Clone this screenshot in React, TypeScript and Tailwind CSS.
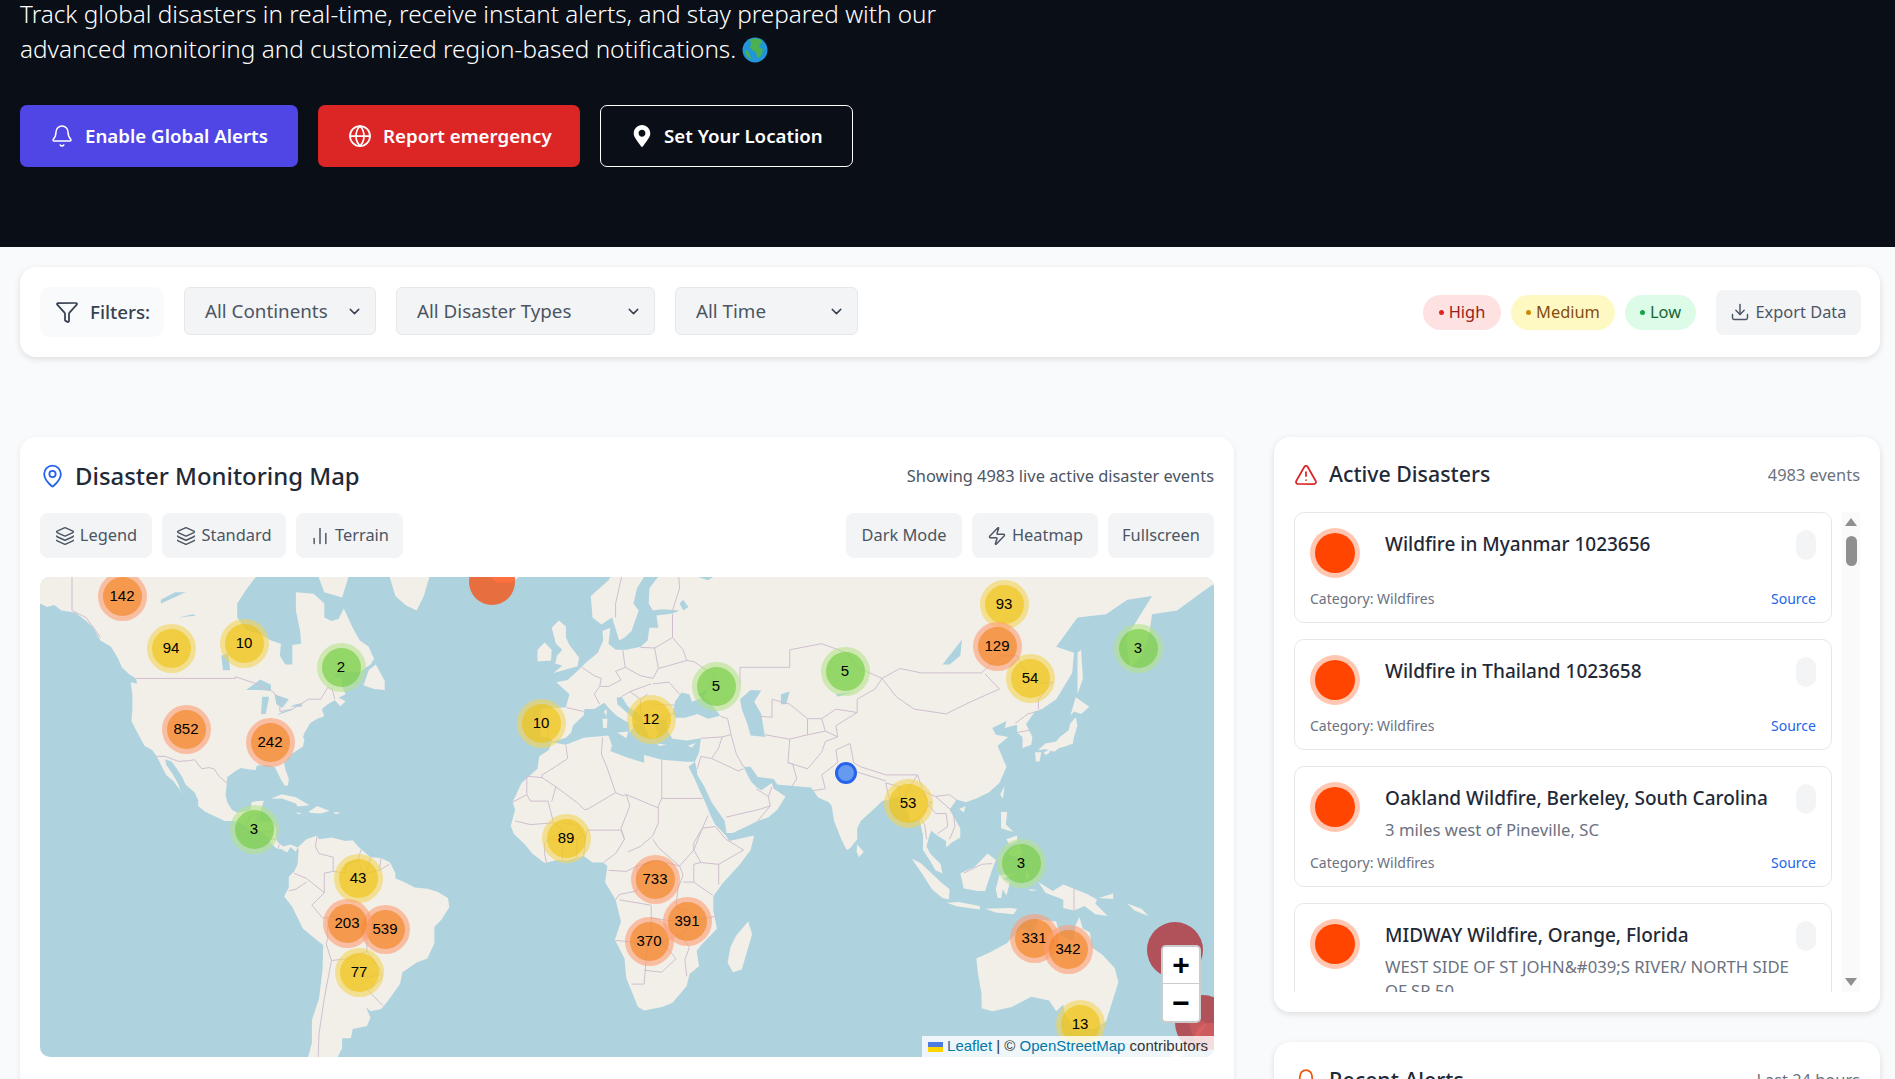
import React from 'react';
import { Bell, ChartNoAxesColumn, ChevronDown, Download, Filter, Globe, Layers, MapPin, TriangleAlert, Zap } from 'lucide-react';
import { FaMapMarkerAlt } from 'react-icons/fa';

// map projection: web mercator fitted to the visible part of the world
const px = (lon: number) => 533 + 3.553 * lon;
const py = (lat: number) => 301.5 - 203.4 * Math.log(Math.tan(Math.PI / 4 + (lat * Math.PI) / 360));
const toPath = (c: number[], close = true) => {
  let d = '';
  for (let i = 0; i < c.length; i += 2) {
    d += `${i === 0 ? 'M' : 'L'}${px(c[i]).toFixed(1)} ${py(c[i + 1]).toFixed(1)}`;
  }
  return close ? d + 'Z' : d;
};

const land: number[][] = [
  // north america
  [-155,72,-155,60,-150,61,-148,60.5,-146,60.8,-144,60,-140,59.7,-137,58.5,-135,57.5,-133,55.5,-130,54.5,-128,52.5,-127,51,-125,49.8,-123,49,-122.7,48,-124.5,48.3,-124,46,-124,43,-124.3,40.5,-122.5,37.8,-120.6,35,-118.5,34,-117.2,32.6,-116,30.5,-114.5,28,-112.5,26.5,-110.5,24,-109.7,23,-110.5,23.8,-111,25.5,-112.5,28,-114.5,30.5,-114.8,31.8,-113,31.3,-111.5,29.5,-110,27.5,-109,25.5,-106.5,23.5,-105.5,21.5,-105.5,20,-103.5,18.5,-101,17.3,-98,16,-95,16,-93,15,-91,13.8,-88,13.2,-87,12.5,-85.5,11,-85,9.8,-83.5,8.5,-82,8.2,-80.5,7.3,-79.5,8.8,-78,7.5,-77.5,8.7,-79.5,9.5,-81.5,9,-83,10,-83.7,11.5,-83.5,14,-85,15.9,-87.5,15.8,-88.8,15.9,-88.2,17.5,-87.7,19.5,-87,21.4,-89,21.3,-90.5,21,-90.7,19,-92,18.6,-94.5,18.2,-96,19,-97.3,21,-97.8,23,-97.4,25.8,-97.3,27.5,-95,29,-93.5,29.7,-91,29.3,-89.3,29.2,-89,30.3,-86,30.4,-84,30,-82.8,28,-82,26.5,-81,25.2,-80.2,25.4,-80,27,-81,29.5,-81.3,31,-79,33.2,-76,34.8,-75.6,36.5,-76,37,-75.5,38,-74,40,-72,41,-70,41.5,-70.7,43,-69,44,-67,44.8,-65.5,43.6,-64,44.6,-66,45.3,-64,46,-65,47.5,-65,49,-67,49.3,-69.5,47.8,-66,50.2,-60,50.2,-57,51.5,-56,52.5,-57.5,54.5,-60,55.5,-62,57.5,-64.5,60.3,-66,58.8,-68,58.5,-70,59,-70,61,-73,62.3,-78,62.5,-78,60,-76.8,57,-76.5,55,-79,54.8,-79,51.5,-81,51.5,-82.5,53,-82.2,55,-85,55.5,-88,56.5,-92,57.2,-94.5,59,-94.5,61,-92,62.8,-90,64,-87,65.5,-85,66.5,-82,67,-82,72],
  [-70,62.5,-65,61.8,-62,66,-68,70,-75,68],
  [-44,60,-42,62,-40,65,-30,68,-20,72,-60,78,-55,70,-52,65,-50,62,-47,60.7],
  [-59,47.7,-56,47,-53,46.8,-53,48.5,-55.5,51.5,-57.5,50.5,-58.5,48.5],
  [-85,21.9,-82,23.1,-78,22.3,-74.2,20.2,-77.5,19.9,-78,20.7,-82,22],
  [-74.4,18.5,-72,20,-68.5,18.7,-71,18,-74,18.2],
  [-78.3,18.3,-76.3,18.1,-77,17.8],
  [-67.2,18.4,-65.7,18.3,-66,17.9,-67.2,18],
  [-24,65.5,-22,64,-18,63.5,-14,64.8,-16,66.5,-22,66.5],
  // south america
  [-77.5,8.7,-75,11,-72,12,-71.5,11,-68,11.5,-64,10.5,-62,10.7,-60,8.5,-57,6,-54,5.8,-51.5,4.5,-50,1.5,-50,0,-48,-0.8,-44.5,-2.5,-41,-2.9,-38,-3.8,-35.2,-5.5,-34.8,-8,-37,-11.5,-39,-13.5,-39,-18,-41,-22,-44,-23,-48,-25.5,-48.7,-28.5,-52,-32.5,-54,-34.5,-57,-35,-58.3,-34,-57,-36.5,-58,-38.3,-62,-39,-62.5,-41,-65,-41,-65,-43,-67,-46,-68,-50,-74,-50,-75,-46,-73.5,-42,-73.5,-37,-71.5,-32,-70.5,-25,-70.3,-18.5,-76,-14,-79,-8,-81.3,-5,-80,-2.5,-80,0.5,-78.5,2,-77.5,4,-77.3,7],
  // africa
  [-6,35.8,-2,35.2,3,36.8,10,37.3,11,35,10.5,33.8,15,32.3,20,31,20,32.8,25,31.7,32,31.2,34.3,31.2,32.5,30,34,27.5,35.7,24,37.2,21,38.5,18,40,15,43,12,44,10.5,51,12,50,8,47,4,42,-1.5,39.5,-5,39.5,-9,40.5,-14,36,-18.5,34.8,-20,35.5,-24,32.8,-26,32,-29,28,-33,25,-34,20,-34.8,18.3,-34,15,-27,14.5,-22,11.8,-17,13.5,-12,12,-6,9,-1,9.7,3.5,8.5,4.5,5.5,4.5,3,6.3,-2,5,-4.5,5.2,-8,4.4,-11.5,7,-13.5,9.5,-16.7,12.5,-17.5,14.7,-16.3,19,-17,21,-14.5,26,-10,29.5,-9.5,32.5,-6.8,34],
  [49.3,-12,50.4,-15.5,47.5,-24.8,45,-25.5,43.5,-23,44.3,-19,46,-15.8],
  // eurasia
  [-9,37,-9.3,39,-9,43,-2,43.4,-1,46,-4.7,48.3,-1.5,48.7,1.5,50.5,4,52,7,53.5,8.5,55.5,8.3,57,10.5,57.5,10,55,12,54,15,54,19,54.5,21,55.5,21.5,57.5,24,57.5,23.5,59.3,28,59.6,30,60,25,60.2,22.5,60,21.3,61,21.5,63,25,65,22,65.8,18,63,17,61,18.5,60,16.5,57,14.5,56,13,55.5,11,59,8,58,5.5,59,5,62,10,64,14,67,20,70,26,71,32,70,40,67.5,41,66.5,35,66.5,34.5,64.5,38,64,40.5,64.7,44,66,44,68,55,68.8,70,72,100,76,140,73,185,70,185,65,177,62.5,170,60,163,59.5,162,56,160,53,156.7,51,155.7,56,158,58,163,62,156,61.5,150,59.5,142,59,136,54.5,141,53.5,140.5,50,136,45,132,43,130,42.5,127.5,39.8,129.3,37,129,35.2,126.5,34.5,126.5,37,125,38,125,39.7,121.5,39,122,40.5,118,39,119,37.5,122.5,37,119.5,35,121,32,122,30,120,26,117,23.5,113.5,22,110.5,21,108,21.7,106,19,109,14,109,11.5,106.5,10,105,8.7,105,10.5,102.5,12,100.8,13.4,100,11,99.5,9,100.5,7,103.5,4,104,1.4,102,2.3,100.5,5,98.5,8,98.5,12,97.5,16.5,95,16,94.3,18.5,92.5,20.5,91.5,22.5,89,21.8,87,21.3,85,19.5,81,16,80,14,80,11,78,8.5,77,8,75.5,11,73.5,16,72.8,20,72,21,69,22.2,67,24.8,62,25.2,57.5,25.6,56.5,27,52,27.5,50,30,48,30,50,26.5,51.5,25,53,24.1,56,26,56.5,24.5,59.8,22.5,57.5,19,55,17,52,16,45,12.7,43.2,12.7,42.7,16,39,21,37,25,35,28,34.8,29.5,34.3,31.2,35.5,33.5,36,36.7,32,36.2,28,36.6,26.5,38.5,26.5,40,26.3,40.8,24,40.8,23,39.5,24,38,23,36.5,21.5,37,20,39.5,19.5,41.5,15.5,43.5,13.7,45.5,12.3,45.3,12.5,44,16,41.7,18.5,40,16.8,40,17,39,16,38,15.8,40,12.5,41.5,10.3,43,8.8,44.3,6,43,3.2,43,3,41.7,0,39.5,-0.5,38,-2,36.8,-5.5,36,-7,37],
  [-5.5,50,1.3,51.2,1.7,52.7,-1,54.8,-2,56,-2,57.7,-4,58.6,-6,57.5,-4.8,55,-3,54,-4.5,53,-5,51.7,-3,51.3],
  [-10,52,-6.2,52.2,-6,54,-8,55.2,-10,54],
  [12.5,38,15.5,38.2,15,36.7],
  [8.3,41,9.7,41,9.5,39,8.5,39],
  [8.7,42.5,9.5,43,9.4,41.5],
  [23.5,35.5,26.3,35.2,24.5,34.9],
  [32.3,35,34.5,35.6,33.5,34.6],
  [80,9.5,81.8,7.5,80.5,6,79.8,7.5],
  // japan and the east
  [130.9,34,133,35.5,136,36,137,37,139.5,38.5,140,40,141.5,41.3,142,39.5,141,37,140.7,35.5,138.5,34.8,136.8,34.5,135.5,33.6,133,34.2],
  [130,33.5,131.8,33.5,131.3,31.3,130.3,31.3],
  [132.5,33.5,134.5,34.2,134,33.3,133,32.8],
  [140,41.6,141.5,45.4,145.3,43.5,143,42,141,42.5],
  [142,46,143.5,49,143,54,142,53.5,142,49],
  [120.2,23,121.5,25.2,121,22],
  [108.7,19.2,110.5,20,110,18.3],
  [120.5,18.5,122.2,18.4,121.8,15,124,13,120.5,14],
  [122,7,125.5,9.7,126.5,7,125,5.8],
  [122,11,125,12,125,10.5,122.8,9.5],
  [109,1.5,113,3.2,116.7,7,119,5.2,117.8,2,116,-3.5,114,-3.5,110,-2.8],
  [95.3,5.6,98,4.2,103.5,-1,106,-3,105.8,-5.9,104,-5.5,101,-3,98.5,1],
  [105.2,-6.8,108.5,-6.6,114.5,-7.7,114.5,-8.7,108,-7.8],
  [119.5,-5.5,119,-3,120,1,125,1.5,121,0,123,-1,122,-4.8,121,-3,120.5,-5.5],
  [127.5,2,128.7,1,128,-0.8,127.4,0.5],
  [128,-3,130.8,-3.2,129,-3.5],
  [131,-1,135,-3.5,138,-1.7,145,-4.5,147.5,-6,147,-7,150.5,-10.5,147,-10,144,-7.7,141,-9,138,-8.3,138,-6,133,-4],
  [116,-8.5,123,-8.3,125,-8.5,124,-10,119,-9.5],
  [148,-5.5,152,-4.2,152,-5.8],
  [156,-7,160,-8.5,162,-10.5,158,-9],
  [172.7,-34.5,175.5,-36.7,178.5,-37.7,176.8,-39.8,175,-41.5,174,-39.5],
  [172,-41,174,-41.5,171,-45,167,-46,170,-43],
  // australia
  [113.5,-22,114,-26,115,-31,115,-34.3,118,-35,123.5,-34,129,-31.6,134,-32.5,136,-35,138,-33.5,138.5,-35.6,140.5,-38,144,-38.8,146.5,-39,150,-37.3,151.5,-33.5,153.5,-28,152.5,-24.5,149,-21,146,-19,145.5,-15,143.5,-14,142.5,-10.8,141.5,-13,140.8,-17.5,137,-15.8,136,-12,131,-11.5,129.5,-15,126,-14,122,-18,117,-20.5],
  [145,-40.8,148.3,-41,147,-43.5,145.5,-42.5],
];

const water: number[][] = [
  [-92,46.8,-88,48.8,-85,47.8,-85,46.6,-88,46.8],
  [-87.8,42,-86.5,42,-85.5,45.5,-87.5,45.5],
  [-84,46,-80,45,-81.8,43.2,-83.5,44],
  [-83.3,41.7,-79,42.8,-79,43,-82,42.4],
  [-79.7,43.5,-76.3,43.5,-76.3,44.2,-78,44],
  [-116,61,-109,62.5,-112,62.5,-116,61.5],
  [-111,59,-106,59.3,-107,59.5],
  [-98.5,50.5,-96.5,50.5,-97,53.5,-99,53],
  [28,42,29,41.2,31.5,41.2,35,42,38,41,41.5,41.6,39,44,36.7,45.2,38,47,35,46,36.5,45.3,33.5,44.5,32.7,46,30.5,46.3,28.7,44.5],
  [47,45,50,46.8,53,46.7,51,44.5,53,42,54,37,50,37.3,49,40,47.5,43],
  [58.5,46,61,46.5,60,44,58.5,44],
  [104,51.5,109.5,55.7,109,53,106,51.5],
  [74,46,79,46.5,74.5,45.5],
  [31,60,32.5,60.5,31,61.5,30,61],
];

const borders: number[][] = [
  [-141,60,-141,72],[-141,60,-137,59,-133,56],
  [-123,49,-95,49,-95,49.3,-89,48,-84.5,46.5,-82.5,45,-82.5,42.5,-79,43,-76,44.3,-74.5,45,-71,45,-69,47.3,-67.8,47,-67,45],
  [-117,32.5,-114.8,32.5,-111,31.3,-108,31.5,-106.5,31.7,-104.5,29.5,-102.5,29.8,-101,29.5,-99.5,27.5,-97.3,25.9],
  [-92,14.5,-91,17.2,-89,17.8,-88.2,18],[-89,17.8,-89.2,15.9,-88.2,15.7],[-83.2,15,-85,13,-87.5,13],[-83.7,11,-85.7,11],[-83,8.5,-82.7,9.5],[-77.5,8.5,-77.3,7.3],
  [-72,12,-72.5,9,-71.5,7,-67.5,6,-67.5,2,-70,1.5,-70,-4],[-78.5,1.5,-75,0,-70,-4],[-80,-3.5,-78,-3,-75,-1],
  [-70,-4,-73.5,-7.5,-70.5,-11,-69,-11,-65.5,-10,-60,-13.5,-58,-16.5,-58,-20,-54.5,-24.5,-53.8,-27,-57.5,-30.2,-53.5,-33.7],
  [-67.5,2,-64,1.5,-64,4,-60.5,5,-59.7,8],[-60.5,5,-59,1.3,-54.5,2.3,-51.7,4],[-57,6,-58,2],[-54,5.8,-54.5,2.3],
  [-69,-11,-69,-17,-69.5,-18,-68,-22.5,-63,-22,-58,-20],[-63,-22,-58,-27,-54.5,-26],[-68,-22.5,-70,-32,-71.5,-40,-72,-50],
  [-2,35,-1.5,32,-5,30,-8.7,28,-8.7,27.3,-13,27.7],[-13,27.7,-13,23,-17,21],[-8.7,27.3,-4.8,25,-6,21.2],[-13,23,-12,21.3,-7,21.3,-5.5,15.5,-12,15,-16.3,16],
  [-4.8,25,1,21,3.3,19,4.2,19.2,12,23.5,9.5,30,8,33,8.3,36.9],[12,23.5,14,22.7,15,23,24,19.5,24,20,25,22,25,31.7],[25,22,36.5,22],
  [15,23,16,20,13.5,14,14.5,11],[24,19.5,24,15.5,22.5,12,19,9,15.5,7.5],[38,17.5,36.4,14,34,10,34,8,30,3.5,24,8.7,22.5,11],
  [3,6.4,3.5,11.5,4,13.5,13.5,13.5,14.5,11,12,7,8.7,4.6],[-5.5,15.5,-3,13.5,-8,10,-8,7,-7.5,4.4],[-3,5,-3,11,1,11,1,6],[-5.5,11,-3,11,1,11,3,12,1,15,-3,15.5],
  [12,-6,13,-4.5,18,-3.5,18,3.5,15,2,10,2.3],[18,3.5,24,5,30,3.5,31,1,29.5,-3,29,-8,31,-9,28.5,-12,22,-11,22,-7.5,13,-6],[22,-11,22,-18,12,-17.2],
  [22,-18,25,-17.8,30,-15.5,33,-13.5,33,-9.5,30.8,-8.2],[21,-18,20,-28.5,16.5,-28.5],[25,-17.8,29,-22,25,-25.5,20,-25],[31,-1,34,-1,37.5,-3.5,39.3,-4.7],[33,-9.5,35,-11.5,40.5,-10.5],
  [30,-15.5,32.8,-19,31.5,-22.3,32,-26.5],[34,-1,34,4,36,4.5,41,4,41,-1.7],[36,4.5,34,8,36.4,14,40,14.5,43,11],[41,4,48,8,43,11],
  [-1.8,43.3,3,42.5],[2.5,51,6,49.5,8,49,7.5,47.5,6,46,7.5,44],[14,54,14.7,51,12,50.3,13.5,48.7,10,47.5,7.5,47.5],[19,54.4,23,54.3,24,50.8,22.5,49,19,49.5,14.7,51],
  [22.5,48,27,48.3,30,46],[24,50.8,32,52.2,34,52,40,49.5,38,47],[28,56,23,54.3],[28,60,30,63,29,69],[12,59,12,61,14,65,20,69],[24,66,20.5,69],[28,56,31,54,32,52.2],[28,56,28,59.5],
  [13.7,45.5,16,46.5,22,48],[19,42,21,42,23,41.3,26.3,41.3,28,42],[22.5,44,28.5,43.8],[21,46,19,45],[16,46.5,19,45,19,42],[-7,42,-7,37],
  [36,36.7,42,37,44.5,37.5],[41.5,41.5,43.5,41,44.5,37.5],[44.5,37.5,46,33,48,30],[39,32,46.5,29,48,29.5],[42,37,41,34.5,39,32,36,32.5,35,29.5],
  [43,17,52,19,55.5,20,52,16],[55.5,20,55,22.5,56,25],[51.5,24.5,55,22.5],
  [61,36.5,60.5,31,61.8,30.7,63,27,61.5,25],[61,36.5,54,37.5],[61,36.5,65,37.3,71,38.3,74.5,37],[60.5,31,66,29.5,70,33.5,71,36,74.5,37],
  [67.5,24,71,24.5,70,28,74.5,31,74,34,78,35.5],[78,35.5,79,31,81,30,88,28,92,28,97,28,94,24,92.5,21],[80,28.7,88,26.5],[88,26,89,22],[92,22,92,25,88,26],
  [97,28,98.5,24,100,21,101,21,97.5,17,99,15,99.5,11],[100,20.5,102,18,105,18,105.5,14.5,102.5,12.5],[102,22.5,107,18.5,107.5,14.5,106,11],[102,22.5,106,23,108,21.5],[98.5,24,102,22.5],
  [47,48,47,51,55,51,61,51,61,54,70,55,77,53.5,80,51,87,49],[52.5,41.5,56,41.3,56,45,61,44,66,41,70,41,74,43,80,42.3,80,45,85,47,87,49],
  [87,49,92,50.8,98,50,103,50,107,50,115,50,120,53,125,53,128,49.5,131,48,135,48.3,131,45,131,43],[87,49,91,45.5,96,43,105,42,112,44.5,120,47,116,49.8],[74.5,37,74,39.5,80,42.3],[66,41,66,37.5],[71,38.3,70,41],
  [124.5,40,128,42,130.5,42.5],[125,38,128.5,38.5],[141,-2.6,141,-9],[110,1.5,115,4,118,4.2],
];

type Tone = 'green' | 'yellow' | 'orange';

const clusters: { n: number; x: number; y: number; tone: Tone }[] = [
  { n: 142, x: 122, y: 596, tone: 'orange' },
  { n: 94, x: 171, y: 648, tone: 'yellow' },
  { n: 10, x: 244, y: 643, tone: 'yellow' },
  { n: 2, x: 341, y: 667, tone: 'green' },
  { n: 852, x: 186, y: 729, tone: 'orange' },
  { n: 242, x: 270, y: 742, tone: 'orange' },
  { n: 3, x: 254, y: 829, tone: 'green' },
  { n: 10, x: 541, y: 723, tone: 'yellow' },
  { n: 89, x: 566, y: 838, tone: 'yellow' },
  { n: 43, x: 358, y: 878, tone: 'yellow' },
  { n: 539, x: 385, y: 929, tone: 'orange' },
  { n: 203, x: 347, y: 923, tone: 'orange' },
  { n: 77, x: 359, y: 972, tone: 'yellow' },
  { n: 93, x: 1004, y: 604, tone: 'yellow' },
  { n: 54, x: 1030, y: 678, tone: 'yellow' },
  { n: 129, x: 997, y: 646, tone: 'orange' },
  { n: 3, x: 1138, y: 648, tone: 'green' },
  { n: 5, x: 845, y: 671, tone: 'green' },
  { n: 5, x: 716, y: 686, tone: 'green' },
  { n: 12, x: 651, y: 719, tone: 'yellow' },
  { n: 53, x: 908, y: 803, tone: 'yellow' },
  { n: 3, x: 1021, y: 863, tone: 'green' },
  { n: 733, x: 655, y: 879, tone: 'orange' },
  { n: 370, x: 649, y: 941, tone: 'orange' },
  { n: 391, x: 687, y: 921, tone: 'orange' },
  { n: 331, x: 1034, y: 938, tone: 'orange' },
  { n: 342, x: 1068, y: 949, tone: 'orange' },
  { n: 13, x: 1080, y: 1024, tone: 'yellow' },
];

const outerTone = {
  green: 'bg-[rgba(181,226,140,0.6)]',
  yellow: 'bg-[rgba(241,211,87,0.6)]',
  orange: 'bg-[rgba(253,156,115,0.6)]',
};
const innerTone = {
  green: 'bg-[rgba(110,204,57,0.6)]',
  yellow: 'bg-[rgba(240,194,12,0.6)]',
  orange: 'bg-[rgba(241,128,23,0.6)]',
};

const disasters = [
  { title: 'Wildfire in Myanmar 1023656' },
  { title: 'Wildfire in Thailand 1023658' },
  { title: 'Oakland Wildfire, Berkeley, South Carolina', sub: '3 miles west of Pineville, SC' },
  { title: 'MIDWAY Wildfire, Orange, Florida', sub: 'WEST SIDE OF ST JOHN&#039;S RIVER/ NORTH SIDE OF SR 50' },
];

const WorldMap: React.FC = () => (
  <div className="relative h-[480px] overflow-hidden rounded-[10px] bg-[#aed3df]">
    <svg className="absolute inset-0" width="1174" height="480" viewBox="0 0 1174 480">
      {land.map((c, i) => <path key={i} d={toPath(c)} fill="#f2efe9" />)}
      {water.map((c, i) => <path key={i} d={toPath(c)} fill="#aed3df" />)}
      {borders.map((c, i) => <path key={i} d={toPath(c, false)} fill="none" stroke="#cfbecf" strokeWidth="1" />)}
    </svg>

    {clusters.map((c, i) => (
      <div
        key={i}
        className={`absolute flex h-[49px] w-[49px] items-center justify-center rounded-full ${outerTone[c.tone]}`}
        style={{ left: c.x - 40 - 24.5, top: c.y - 577 - 24.5 }}
      >
        <div className={`flex h-[39px] w-[39px] items-center justify-center rounded-full font-['Liberation_Sans',sans-serif] text-[15px] text-black ${innerTone[c.tone]}`}>
          {c.n}
        </div>
      </div>
    ))}

    {/* single events */}
    <div className="absolute left-[429px] top-[-18px] h-[46px] w-[46px] overflow-hidden rounded-full bg-[#e76f3f]">
      <div className="absolute left-[22px] top-[6px] h-[18px] w-[26px] rounded-full bg-[#ff7040]" />
    </div>
    <div className="absolute left-[795px] top-[185px] h-[22px] w-[22px] rounded-full border-[3px] border-[#2563eb] bg-[#6699f0]" />
    <div className="absolute left-[1107px] top-[345px] h-[56px] w-[56px] rounded-full bg-[rgba(178,27,34,0.7)]" />
    <div className="absolute left-[1135px] top-[418px] h-[56px] w-[56px] overflow-hidden rounded-full bg-[rgba(178,27,34,0.7)]">
      <div className="absolute left-[20px] top-[28px] h-[30px] w-[40px] rounded-full bg-[rgba(255,110,100,0.35)]" />
    </div>

    <div className="absolute bottom-[34px] right-[13px] w-[40px] overflow-hidden rounded-[5px] border-2 border-[rgba(0,0,0,0.2)] bg-white font-['Liberation_Sans',sans-serif] text-black">
      <div className="flex h-[37px] items-center justify-center border-b border-[#ccc] text-[30px] font-bold leading-none">+</div>
      <div className="flex h-[37px] items-center justify-center text-[30px] font-bold leading-none">−</div>
    </div>

    <div className="absolute bottom-0 right-0 flex h-[21px] items-center gap-[4px] bg-[rgba(255,255,255,0.8)] pl-[6px] pr-[6px] font-['Liberation_Sans',sans-serif] text-[15px] text-[#333]">
      <span className="flex h-[10px] w-[15px] flex-col">
        <span className="h-[5px] bg-[#4c7be1]" />
        <span className="h-[5px] bg-[#ffd500]" />
      </span>
      <span><span className="text-[#0078a8]">Leaflet</span> | © <span className="text-[#0078a8]">OpenStreetMap</span> contributors</span>
    </div>
  </div>
);

const ToolButton: React.FC<{ label: string; width: string; icon?: React.ReactNode }> = ({ label, width, icon }) => (
  <div className={`flex h-[45px] items-center justify-center gap-[5px] rounded-[8px] bg-[#f3f4f6] text-[16.4px] text-[#4b5563] ${width}`}>
    {icon}
    {label}
  </div>
);

const Select: React.FC<{ label: string; width: string }> = ({ label, width }) => (
  <div className={`flex h-[48px] items-center justify-between rounded-[6px] border border-[#e5e7eb] bg-[#f3f4f6] pl-[20px] pr-[12px] text-[18.8px] text-[#4b5563] ${width}`}>
    <span className="pt-[1px]">{label}</span>
    <ChevronDown className="h-[17px] w-[17px] text-[#374151]" strokeWidth={2} />
  </div>
);

const DisasterItem: React.FC<{ title: string; sub?: string }> = ({ title, sub }) => (
  <div className="shrink-0 rounded-[10px] border border-[#e5e7eb] bg-white px-[15px] pb-[10px] pt-[15px]">
    <div className="flex">
      <div className="mr-[25px] flex h-[50px] w-[50px] shrink-0 items-center justify-center rounded-full bg-[rgba(255,69,0,0.3)]">
        <div className="h-[40px] w-[40px] rounded-full bg-[#ff4500]" />
      </div>
      <div className="min-w-0 flex-1">
        <div className="text-[19px] font-medium leading-[32px] text-[#1f2937]">{title}</div>
        {sub && <div className="mt-[4px] text-[16.7px] leading-[24px] text-[#6b7280]">{sub}</div>}
      </div>
      <div className="mt-[2px] h-[30px] w-[20px] shrink-0 rounded-[10px] bg-[#f3f4f6]" />
    </div>
    <div className="mt-[8px] flex items-center justify-between text-[14px] leading-[26px]">
      <span className="text-[#6b7280]">Category: Wildfires</span>
      <span className="text-[#2563eb]">Source</span>
    </div>
  </div>
);

const App: React.FC = () => {
  return (
    <div className="h-[1079px] overflow-hidden bg-[#f9fafb] font-['Noto_Sans',sans-serif]">
      {/* hero, page is scrolled so the heading is out of view */}
      <section className="h-[247px] overflow-hidden bg-[#0a0e17] px-5 text-white">
        <p className="-mt-[4px] text-[24.3px] font-light leading-[35px]">
          Track global disasters in real-time, receive instant alerts, and stay prepared with our
          <br />
          advanced monitoring and customized region-based notifications.
          <svg className="ml-[6px] inline-block h-[26px] w-[26px] align-[-5px]" viewBox="0 0 26 26">
            <circle cx="13" cy="13" r="12.5" fill="#2196d8" />
            <path d="M8 3c3-2 8-2 11 0l1 3-3 2 1 3 3 1-1 5-3 4-2-1-1-5-4-2-2-3 1-3zM3 13l3 1 2 4 1 4c-3-1-6-5-6-9z" fill="#4caf50" />
          </svg>
        </p>
        <div className="mt-[39px] flex gap-5">
          <button className="flex h-[62px] w-[278px] items-center gap-[11px] rounded-[7px] bg-[#4f46e5] pl-[30px] text-[18.7px] font-semibold">
            <Bell className="h-6 w-6" strokeWidth={1.5} />
            Enable Global Alerts
          </button>
          <button className="flex h-[62px] w-[262px] items-center gap-[11px] rounded-[7px] bg-[#dc2626] pl-[30px] text-[18.7px] font-semibold">
            <Globe className="h-6 w-6" strokeWidth={1.75} />
            Report emergency
          </button>
          <button className="flex h-[62px] w-[253px] items-center gap-[13px] rounded-[7px] border border-white pl-[32px] text-[18.7px] font-semibold">
            <FaMapMarkerAlt className="h-[22px] w-[18px]" />
            Set Your Location
          </button>
        </div>
      </section>

      <main className="pl-5 pr-[15px] pt-5">
        {/* filters */}
        <div className="flex h-[90px] items-center justify-between rounded-[16px] bg-white pl-5 pr-[19px] shadow-[0_2px_6px_rgba(0,0,0,0.12)]">
          <div className="flex items-start gap-5">
            <div className="flex h-[50px] w-[124px] items-center gap-[11px] rounded-[10px] bg-[#f9fafb] pl-[15px] text-[18.8px] font-medium text-[#374151]">
              <Filter className="h-6 w-6" strokeWidth={1.75} />
              Filters:
            </div>
            <Select label="All Continents" width="w-[192px]" />
            <Select label="All Disaster Types" width="w-[259px]" />
            <Select label="All Time" width="w-[183px]" />
          </div>
          <div className="flex items-center">
            <div className="flex items-center gap-[10px] text-[16.4px]">
              <span className="flex h-[35px] w-[78px] items-center justify-center gap-[5px] rounded-full bg-[#fee2e2] text-[#991b1b]">
                <span className="h-[5px] w-[5px] rounded-full bg-[#dc2626]" />High
              </span>
              <span className="flex h-[35px] w-[104px] items-center justify-center gap-[5px] rounded-full bg-[#fef9c3] text-[#854d0e]">
                <span className="h-[5px] w-[5px] rounded-full bg-[#ca8a04]" />Medium
              </span>
              <span className="flex h-[35px] w-[71px] items-center justify-center gap-[5px] rounded-full bg-[#dcfce7] text-[#166534]">
                <span className="h-[5px] w-[5px] rounded-full bg-[#16a34a]" />Low
              </span>
            </div>
            <div className="ml-5 flex h-[45px] w-[145px] items-center justify-center gap-[5px] rounded-[8px] bg-[#f3f4f6] text-[16.4px] text-[#4b5563]">
              <Download className="h-5 w-5" strokeWidth={1.75} />
              Export Data
            </div>
          </div>
        </div>

        <div className="mt-[80px] flex gap-10">
          {/* map */}
          <div className="h-[700px] w-[1214px] shrink-0 rounded-[16px] bg-white p-5 shadow-[0_2px_6px_rgba(0,0,0,0.08)]">
            <div className="flex h-[38px] items-center justify-between">
              <div className="flex items-center gap-[10px]">
                <MapPin className="h-[26px] w-[25px] text-[#2563eb]" strokeWidth={1.75} />
                <h2 className="text-[23.9px] font-medium text-[#1f2937]">Disaster Monitoring Map</h2>
              </div>
              <span className="text-[16.4px] text-[#4b5563]">Showing 4983 live active disaster events</span>
            </div>
            <div className="mt-[18px] flex justify-between">
              <div className="flex gap-[10px]">
                <ToolButton label="Legend" width="w-[112px]" icon={<Layers className="h-5 w-5" strokeWidth={1.75} />} />
                <ToolButton label="Standard" width="w-[124px]" icon={<Layers className="h-5 w-5" strokeWidth={1.75} />} />
                <ToolButton label="Terrain" width="w-[107px]" icon={<ChartNoAxesColumn className="h-5 w-5" strokeWidth={1.75} />} />
              </div>
              <div className="flex gap-[10px]">
                <ToolButton label="Dark Mode" width="w-[116px]" />
                <ToolButton label="Heatmap" width="w-[126px]" icon={<Zap className="h-5 w-5" strokeWidth={1.75} />} />
                <ToolButton label="Fullscreen" width="w-[106px]" />
              </div>
            </div>
            <div className="mt-[19px]">
              <WorldMap />
            </div>
          </div>

          {/* right column */}
          <div className="flex w-[606px] shrink-0 flex-col gap-[30px]">
            <div className="rounded-[16px] bg-white p-5 shadow-[0_2px_6px_rgba(0,0,0,0.12)]">
              <div className="flex h-[36px] items-center justify-between">
                <div className="flex items-center gap-[11px]">
                  <TriangleAlert className="h-6 w-6 text-[#dc2626]" strokeWidth={1.75} />
                  <h3 className="-mt-[2px] text-[21.3px] font-medium text-[#1f2937]">Active Disasters</h3>
                </div>
                <span className="text-[16.4px] text-[#6b7280]">4983 events</span>
              </div>
              <div className="mt-[19px] flex h-[480px] gap-[10px] overflow-hidden">
                <div className="flex w-[538px] shrink-0 flex-col gap-4 overflow-hidden">
                  {disasters.map((d) => <DisasterItem key={d.title} title={d.title} sub={d.sub} />)}
                </div>
                <div className="flex w-[19px] flex-col items-center justify-between bg-[#fafafa] py-[6px]">
                  <div className="flex flex-col items-center gap-[10px]">
                    <div className="h-0 w-0 border-x-[6px] border-b-[8px] border-x-transparent border-b-[#8f8f8f]" />
                    <div className="h-[30px] w-[11px] rounded-full bg-[#8f8f8f]" />
                  </div>
                  <div className="h-0 w-0 border-x-[6px] border-t-[8px] border-x-transparent border-t-[#8f8f8f]" />
                </div>
              </div>
            </div>

            <div className="h-[200px] rounded-[16px] bg-white p-5 shadow-[0_2px_6px_rgba(0,0,0,0.12)]">
              <div className="flex h-[36px] items-center justify-between">
                <div className="flex items-center gap-[11px]">
                  <Bell className="h-6 w-6 text-[#ea580c]" strokeWidth={1.75} />
                  <h3 className="text-[21.3px] font-medium text-[#1f2937]">Recent Alerts</h3>
                </div>
                <span className="text-[16.4px] text-[#6b7280]">Last 24 hours</span>
              </div>
            </div>
          </div>
        </div>
      </main>
    </div>
  );
};

export default App;
